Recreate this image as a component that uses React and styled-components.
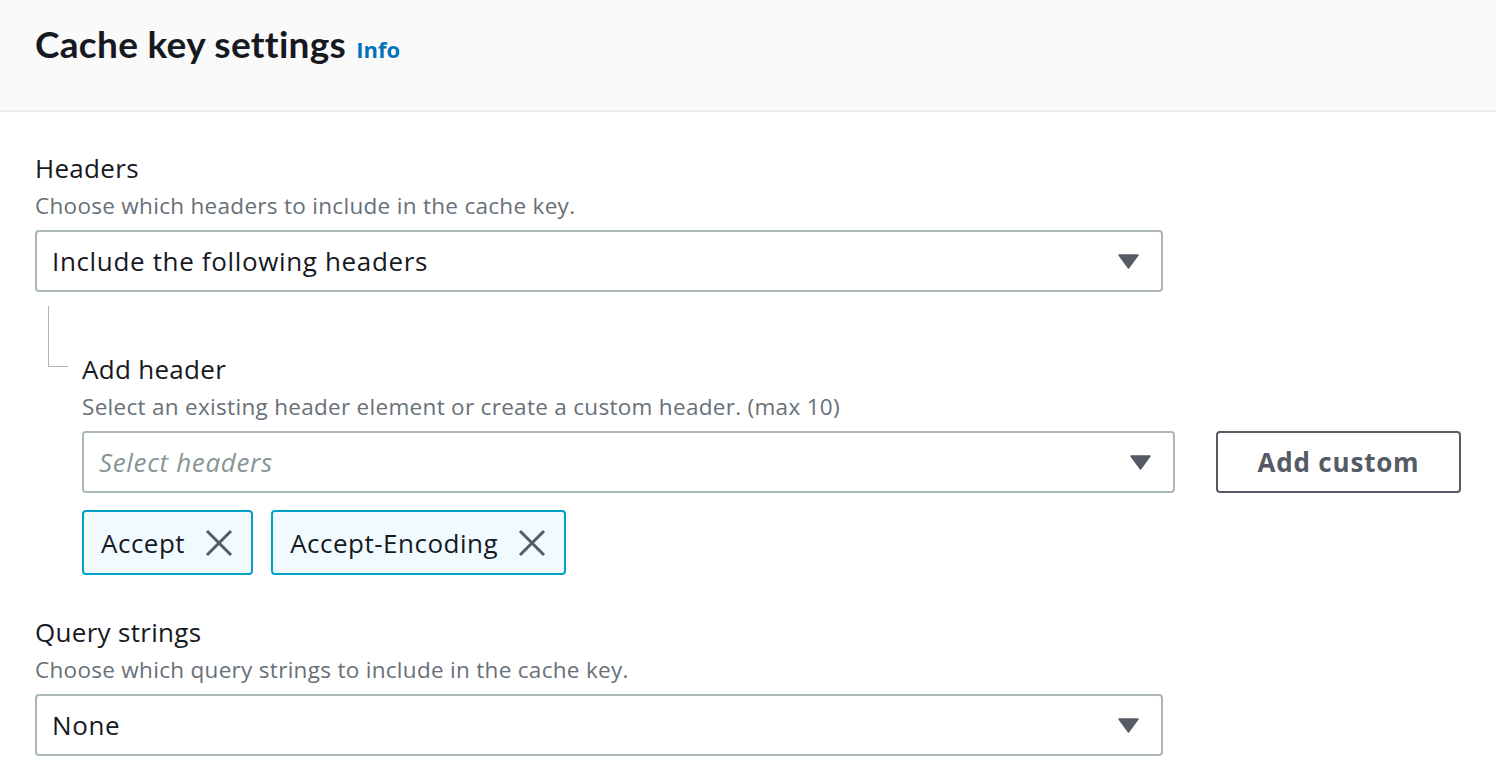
import React from 'react';
import styled, { createGlobalStyle } from 'styled-components';

const GlobalStyle = createGlobalStyle`
  body {
    margin: 0;
    background: #ffffff;
    font-family: "Open Sans", "Noto Sans", sans-serif;
    color: #16191f;
  }
`;

const Page = styled.div`
  width: 1496px;
  height: 772px;
  overflow: hidden;
  background: #ffffff;
`;

const Header = styled.div`
  height: 112px;
  background: #fafafa;
  border-bottom: 2px solid #eaeded;
  padding: 19px 35px 0;
  display: flex;
  align-items: baseline;
  gap: 10px;
  box-sizing: border-box;
`;

const Title = styled.h2`
  margin: 0;
  font-family: Lato, sans-serif;
  font-size: 37px;
  line-height: 50px;
  font-weight: 700;
  letter-spacing: 0.3px;
  color: #16191f;
`;

const InfoLink = styled.a`
  font-size: 22px;
  font-weight: 700;
  color: #0073bb;
  text-decoration: none;
`;

const Body = styled.div`
  padding: 38px 35px 0;
`;

const Field = styled.div`
  margin-top: ${p => p.top || 0}px;
`;

const Label = styled.div`
  font-size: 26px;
  line-height: 36px;
  letter-spacing: 0.3px;
  color: #16191f;
`;

const Description = styled.div`
  font-size: 22.5px;
  line-height: 34px;
  letter-spacing: 0.3px;
  padding-top: 3px;
  color: #687078;
  margin-bottom: 7px;
`;

const SelectBox = styled.div`
  box-sizing: border-box;
  width: ${p => p.width}px;
  height: 62px;
  flex-shrink: 0;
  border: 2px solid #aab7b8;
  border-radius: 4px;
  display: flex;
  align-items: center;
  justify-content: space-between;
  padding: 0 22px 0 15px;
  font-size: 26px;
  letter-spacing: 0.65px;
  color: ${p => (p.placeholder ? '#879596' : '#16191f')};
  font-style: ${p => (p.placeholder ? 'italic' : 'normal')};
`;

const Nested = styled.div`
  display: flex;
  margin-top: 14px;
`;

const Connector = styled.div`
  width: 20px;
  height: 61px;
  margin-left: 13px;
  margin-right: 14px;
  border-left: 1.5px solid #aab7b8;
  border-bottom: 1.5px solid #aab7b8;
  box-sizing: border-box;
`;

const NestedContent = styled.div`
  padding-top: 45px;
`;

const Row = styled.div`
  display: flex;
  gap: 41px;
`;

const Button = styled.button`
  box-sizing: border-box;
  width: 245px;
  height: 62px;
  flex-shrink: 0;
  border: 2px solid #545b64;
  border-radius: 4px;
  background: #ffffff;
  color: #545b64;
  font-family: inherit;
  font-size: 26px;
  font-weight: 700;
  letter-spacing: 0.8px;
`;

const Tokens = styled.div`
  display: flex;
  gap: 18px;
  margin-top: 17px;
`;

const Token = styled.div`
  box-sizing: border-box;
  height: 65px;
  display: flex;
  align-items: center;
  gap: 20px;
  padding: 0 18px 0 17px;
  background: #f1faff;
  border: 2px solid #00a1c9;
  border-radius: 4px;
  font-size: 26px;
  letter-spacing: 0.5px;
  color: #16191f;
`;

const Caret = () => (
  <svg width="21" height="15" viewBox="0 0 21 15">
    <path d="M1 1 H20 L10.5 14 Z" fill="#545b64" stroke="#545b64" strokeWidth="1.5" strokeLinejoin="round" />
  </svg>
);

const Close = () => (
  <svg width="28" height="28" viewBox="0 0 28 28">
    <path d="M2 2 L26 26 M26 2 L2 26" stroke="#545b64" strokeWidth="3" strokeLinecap="butt" />
  </svg>
);

const Select = ({ width, value, placeholder }) => (
  <SelectBox width={width} placeholder={placeholder ? 1 : 0}>
    <span>{value || placeholder}</span>
    <Caret />
  </SelectBox>
);

const App = () => (
  <Page>
    <GlobalStyle />
    <Header>
      <Title>Cache key settings</Title>
      <InfoLink>Info</InfoLink>
    </Header>
    <Body>
      <Field>
        <Label>Headers</Label>
        <Description>Choose which headers to include in the cache key.</Description>
        <Select width={1128} value="Include the following headers" />
      </Field>
      <Nested>
        <Connector />
        <NestedContent>
          <Label>Add header</Label>
          <Description>Select an existing header element or create a custom header. (max 10)</Description>
          <Row>
            <Select width={1093} placeholder="Select headers" />
            <Button>Add custom</Button>
          </Row>
          <Tokens>
            {['Accept', 'Accept-Encoding'].map(name => (
              <Token key={name}>
                <span>{name}</span>
                <Close />
              </Token>
            ))}
          </Tokens>
        </NestedContent>
      </Nested>
      <Field top={39}>
        <Label>Query strings</Label>
        <Description>Choose which query strings to include in the cache key.</Description>
        <Select width={1128} value="None" />
      </Field>
    </Body>
  </Page>
);

export default App;
